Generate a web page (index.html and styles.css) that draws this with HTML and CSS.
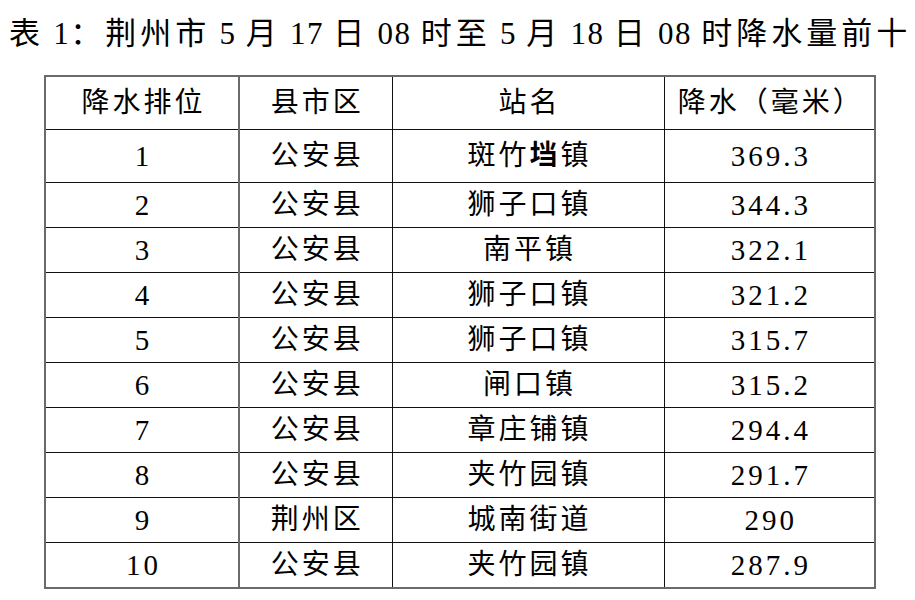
FILE: index.html
```html
<!DOCTYPE html>
<html lang="zh-CN">
<head>
<meta charset="utf-8">
<title>荆州市降水量前十</title>
<link rel="stylesheet" href="styles.css">
</head>
<body>
<div class="page">
  <div class="title">表<span class="lat"> 1</span>：荆州市<span class="lat"> 5 </span>月<span class="lat"> 17 </span>日<span class="lat"> 08 </span>时至<span class="lat"> 5 </span>月<span class="lat"> 18 </span>日<span class="lat"> 08 </span>时降水量前十</div>
  <table class="rain">
    <colgroup>
      <col class="c1"><col class="c2"><col class="c3"><col class="c4">
    </colgroup>
    <thead>
      <tr class="head"><th>降水排位</th><th>县市区</th><th>站名</th><th>降水（毫米）</th></tr>
    </thead>
    <tbody>
      <tr class="first"><td class="num">1</td><td>公安县</td><td>斑竹<span class="bold">垱</span>镇</td><td class="num">369.3</td></tr>
      <tr><td class="num">2</td><td>公安县</td><td>狮子口镇</td><td class="num">344.3</td></tr>
      <tr><td class="num">3</td><td>公安县</td><td>南平镇</td><td class="num">322.1</td></tr>
      <tr><td class="num">4</td><td>公安县</td><td>狮子口镇</td><td class="num">321.2</td></tr>
      <tr><td class="num">5</td><td>公安县</td><td>狮子口镇</td><td class="num">315.7</td></tr>
      <tr><td class="num">6</td><td>公安县</td><td>闸口镇</td><td class="num">315.2</td></tr>
      <tr><td class="num">7</td><td>公安县</td><td>章庄铺镇</td><td class="num">294.4</td></tr>
      <tr><td class="num">8</td><td>公安县</td><td>夹竹园镇</td><td class="num">291.7</td></tr>
      <tr><td class="num">9</td><td>荆州区</td><td>城南街道</td><td class="num">290</td></tr>
      <tr><td class="num">10</td><td>公安县</td><td>夹竹园镇</td><td class="num">287.9</td></tr>
    </tbody>
  </table>
</div>
</body>
</html>
```

FILE: styles.css
```css
html, body {
  margin: 0;
  padding: 0;
  background: #ffffff;
}

.page {
  width: 915px;
  height: 600px;
  overflow: hidden;
  font-family: "Liberation Serif", "Noto Sans CJK SC", serif;
  color: #000;
}

.title {
  font-size: 31px;
  line-height: 30px;
  letter-spacing: 4px;
  padding: 19px 0 0 9px;
  height: 38px;
  white-space: nowrap;
}

.title .lat {
  letter-spacing: 1.5px;
}

.rain {
  margin: 18px 0 0 44px;
  width: 830px;
  border-collapse: collapse;
  table-layout: fixed;
  border: 2px solid #6a6a6a;
}

.c1 { width: 194px; }
.c2 { width: 153px; }
.c3 { width: 272px; }
.c4 { width: 211px; }

.rain th,
.rain td {
  border: 1px solid #111;
  padding: 0 0 0 3px;
  text-align: center;
  vertical-align: middle;
  font-weight: normal;
  font-size: 28px;
  letter-spacing: 3px;
  line-height: 30px;
  white-space: nowrap;
}

.rain th:first-child,
.rain td:first-child {
  border-right: 2px solid #6a6a6a;
}

.rain .head th { height: 52px; }
.rain tbody tr td { height: 44px; }
.rain tbody tr.first td { height: 52px; }

.rain .num {
  font-size: 29px;
  letter-spacing: 3px;
}

.bold {
  font-weight: bold;
}
```
